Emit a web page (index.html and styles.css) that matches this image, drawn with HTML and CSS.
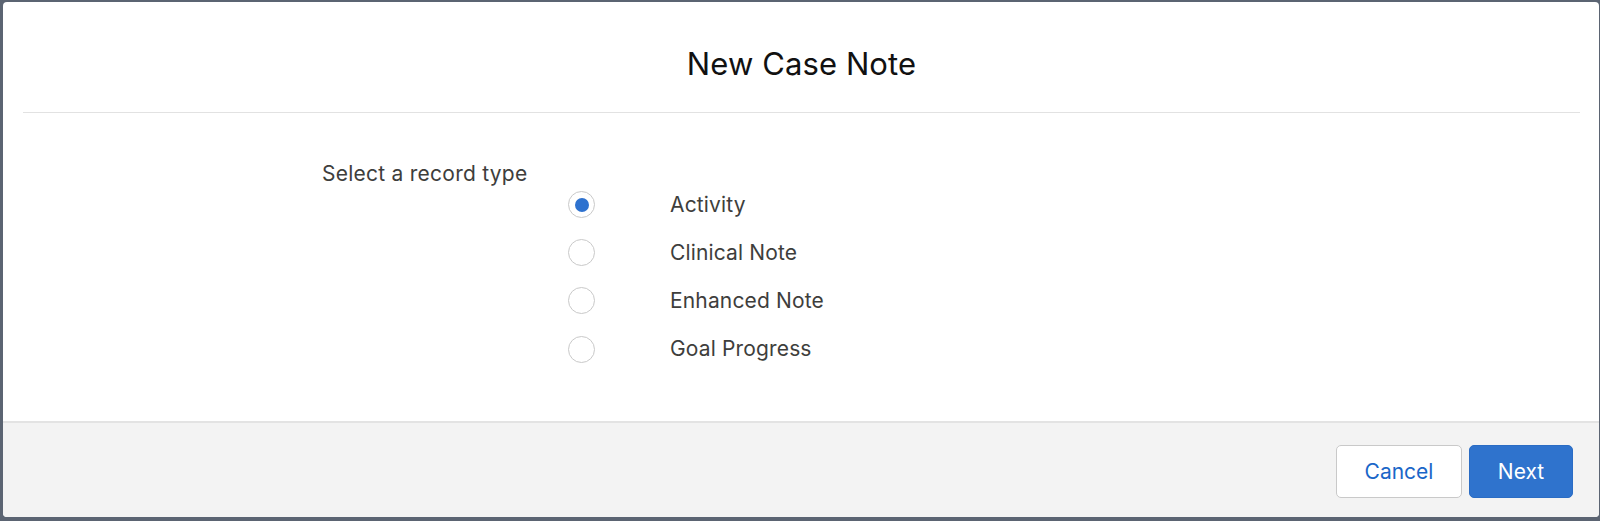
FILE: index.html
```html
<!DOCTYPE html>
<html lang="en">
<head>
<meta charset="utf-8">
<title>New Case Note</title>
<link rel="stylesheet" href="styles.css">
</head>
<body>
<div class="modal">
  <header class="modal-header">
    <h1 class="modal-title">New Case Note</h1>
  </header>
  <section class="modal-body">
    <fieldset class="record-types">
      <legend class="legend">Select a record type</legend>
      <div class="radio-list">
        <label class="radio-row">
          <span class="radio checked"></span>
          <span class="radio-label">Activity</span>
        </label>
        <label class="radio-row">
          <span class="radio"></span>
          <span class="radio-label">Clinical Note</span>
        </label>
        <label class="radio-row">
          <span class="radio"></span>
          <span class="radio-label">Enhanced Note</span>
        </label>
        <label class="radio-row">
          <span class="radio"></span>
          <span class="radio-label">Goal Progress</span>
        </label>
      </div>
    </fieldset>
  </section>
  <footer class="modal-footer">
    <button class="btn btn-neutral">Cancel</button>
    <button class="btn btn-brand">Next</button>
  </footer>
</div>
</body>
</html>
```

FILE: styles.css
```css
* { box-sizing: border-box; }

html, body {
  margin: 0;
  padding: 0;
}

body {
  background: #5b6472;
  width: 1600px;
  height: 521px;
  overflow: hidden;
  font-family: Inter, "Liberation Sans", Arial, sans-serif;
  color: #3e3e3c;
  padding: 2px 1px 4px 3px;
}

.modal {
  background: #ffffff;
  border-radius: 4px;
  height: 515px;
  display: flex;
  flex-direction: column;
  overflow: hidden;
}

.modal-header {
  margin: 0 19px 0 20px;
  padding: 44px 0 30px;
  border-bottom: 1px solid #e2e2e2;
  flex: none;
}

.modal-title {
  margin: 0;
  font-size: 31px;
  line-height: 36px;
  font-weight: 400;
  letter-spacing: 0.1px;
  color: #111111;
  text-align: center;
}

.modal-body {
  flex: 1;
  padding: 49px 0 0 319px;
}

.record-types {
  border: 0;
  margin: 0;
  padding: 0;
  min-width: 0;
}

.legend {
  padding: 0;
  font-size: 21px;
  line-height: 24px;
  letter-spacing: 0.25px;
  color: #3e3e3c;
  float: left;
  width: 100%;
}

.radio-list {
  clear: both;
  padding-top: 5px;
  padding-left: 246px;
  display: flex;
  flex-direction: column;
  gap: 21.2px;
}

.radio-row {
  display: flex;
  align-items: center;
  gap: 75px;
  height: 27px;
}

.radio {
  width: 27px;
  height: 27px;
  border-radius: 50%;
  border: 1px solid #c9c9c9;
  background: #fff;
  flex: none;
  display: flex;
  align-items: center;
  justify-content: center;
}

.radio.checked::after {
  content: "";
  width: 14px;
  height: 14px;
  border-radius: 50%;
  background: #2e72cf;
}

.radio-label {
  font-size: 21px;
  line-height: 24px;
  letter-spacing: 0.15px;
  color: #3e3e3c;
}

.modal-footer {
  flex: none;
  height: 96px;
  background: #f3f3f3;
  border-top: 2px solid #e3e3e3;
  display: flex;
  justify-content: flex-end;
  align-items: flex-start;
  gap: 7px;
  padding: 22px 26px 0 0;
}

.btn {
  font-family: Inter, "Liberation Sans", Arial, sans-serif;
  font-size: 21px;
  height: 53px;
  border-radius: 5px;
  padding: 0;
  line-height: 1;
  cursor: pointer;
}

.btn-neutral {
  width: 126px;
  background: #ffffff;
  border: 1px solid #c9c9c9;
  color: #1a66c8;
}

.btn-brand {
  width: 104px;
  background: #2f73cd;
  border: 1px solid #2a6cc4;
  color: #ffffff;
}
```
